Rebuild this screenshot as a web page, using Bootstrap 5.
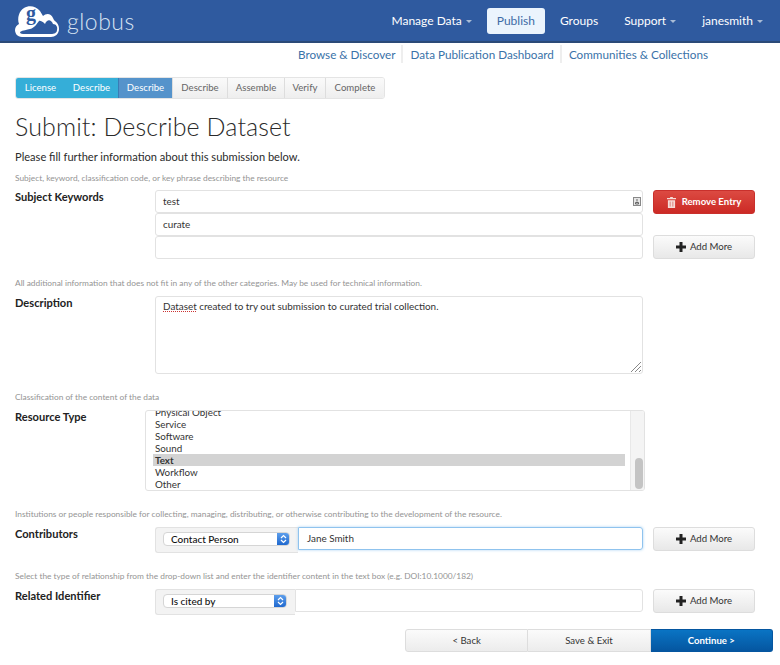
<!DOCTYPE html>
<html lang="en">
<head>
<meta charset="UTF-8">
<meta name="viewport" content="width=device-width, initial-scale=1">
<title>Submit: Describe Dataset</title>
<link href="https://cdn.jsdelivr.net/npm/bootstrap@5.3.0/dist/css/bootstrap.min.css" rel="stylesheet">
<style>
body { font-family: Lato, "Open Sans", sans-serif; color: #2b2b2b; font-size: 13px; background: #fff; }
.top-bar { height: 43px; background: #2f5a9f; border-bottom: 2px solid #2b4a78; padding: 0 4px 0 15px; }
.logo-mark { margin-top: -3px; }
.logo-word { font-size: 23px; font-weight: 300; color: #d7e3f2; letter-spacing: .5px; line-height: 1; margin-left: 8px; margin-top: 1px; }
.logo-g { font-family: "Liberation Serif", serif; font-weight: 700; font-size: 20px; fill: #2f5a9f; }
.top-link { color: #fff; font-size: 12px; text-decoration: none; padding: 0 13px; line-height: 26px; height: 26px; display: block; }
.top-link.on { background: #ebf4fd; color: #3e6ba6; border-radius: 3px; margin: 0 2px; padding: 0 10px; }
.nav-caret { display: inline-block; border-top: 3px solid #a9bcd6; border-left: 3px solid transparent; border-right: 3px solid transparent; margin-left: 4px; vertical-align: middle; }
.sub-links { margin: 2px 66px 0 0; height: 18px; }
.sub-links a { color: #3a72a8; font-size: 11.7px; text-decoration: none; padding: 0 6px 0 7px; line-height: 18px; border-left: 2px solid #eee; }
.sub-links a:first-child { border-left: 0; }
.page-wrap { padding: 0 7px 0 15px; }
.step-bar { margin-top: 14px; width: 370px; height: 22px; border-radius: 3px; overflow: hidden; border: 1px solid #e4e4e4; }
.step-item { font-size: 9.6px; line-height: 20px; text-align: center; color: #666; background: linear-gradient(#fafafa, #eee); border-left: 1px solid #ddd; }
.step-item.done { color: #fff; background: #35aed8; border-left: 0; }
.step-item.now { color: #fff; background: #5593cb; border-left: 1px solid #3a7cb5; }
.page-title { font-size: 25px; font-weight: 300; line-height: 32px; margin: 11px 0 0; color: #2a2a2a; letter-spacing: .1px; }
.intro { font-size: 11.1px; line-height: 16px; margin: 7px 0 0; }
.help-line { font-size: 8.35px; line-height: 12px; color: #949494; margin: 17px 0 0; }
.intro + .help-line { margin-top: 7px; }
.field-row { display: flex; margin-top: 7px; }
.field-row.tight { margin-top: 6px; }
.field-row.tight + .help-line { margin-top: 18px; }
.field-label { width: 140px; flex: none; font-size: 11.1px; font-weight: 700; line-height: 14px; color: #222; }
.field-main { width: 488px; flex: none; }
.field-side { width: 102px; flex: none; margin-left: 10px; }
.text-box { height: 23px; border: 1px solid #e2e2e2; border-radius: 3px; padding: 0 7px; font-size: 9.9px; display: flex; align-items: center; justify-content: space-between; background: #fff; color: #333; }
.key-icon { margin-right: -6px; }
.text-area { height: 78px; border: 1px solid #e2e2e2; border-radius: 3px; padding: 1px 7px; font-size: 9.9px; line-height: 16px; position: relative; color: #333; }
.spell { text-decoration: underline dotted #c33; }
.grip-corner { position: absolute; right: 1px; bottom: 1px; }
.side-btn { display: flex; align-items: center; justify-content: center; gap: 4px; width: 102px; height: 24px; border-radius: 3px; font-size: 9.6px; border: 1px solid #ddd; background: linear-gradient(#fbfbfb, #e8e8e8); color: #333; padding: 0; }
.side-btn.danger { gap: 6px; background: linear-gradient(#dc4a42, #cc2a25); border-color: #c9302c; color: #fff; font-weight: 700; }
.pick-list { margin-left: -10px; width: 500px; height: 81px; border: 1px solid #e2e2e2; border-radius: 3px; display: flex; overflow: hidden; }
.pick-body { flex: 1; padding: 0 5px 0 7px; overflow: hidden; }
.pick-body ul { margin: -5px 0 0; padding: 0; list-style: none; }
.pick-body li { font-size: 9.8px; line-height: 12px; padding-left: 2px; color: #333; }
.pick-body li.sel { background: #d3d3d3; font-weight: 700; }
.pick-scroll { width: 14px; flex: none; background: #f4f4f4; border-left: 1px solid #e8e8e8; display: flex; align-items: flex-end; justify-content: flex-end; padding: 0 1px 1px 0; }
.pick-thumb { width: 8px; height: 31px; background: #c4c4c4; border-radius: 4px; }
.input-join { display: flex; }
.join-addon { background: #f3f3f3; border: 1px solid #e2e2e2; border-right: 0; border-radius: 3px 0 0 3px; display: flex; align-items: center; padding: 0 8px 2px 7px; height: 26px; }
.mac-select { display: flex; align-items: center; justify-content: space-between; height: 14px; border-radius: 4px; background: #fff; border: 1px solid #d5d5d5; font-size: 10px; font-weight: 500; padding-left: 7px; color: #111; overflow: hidden; }
.mac-select.wide { width: 127px; }
.mac-select.narrow { width: 124px; }
.mac-arrows { width: 13px; height: 14px; background: linear-gradient(#62a3ee, #1a64cc); display: flex; align-items: center; justify-content: center; margin-right: -1px; }
.join-input { flex: 1; height: 23px; border: 1px solid #e2e2e2; border-radius: 0 3px 3px 0; padding: 0 8px; font-size: 9.9px; line-height: 21px; color: #333; }
.join-input.focused { border-color: #8fc3ee; box-shadow: 0 0 3px #a9d2f2; }
.foot-btns { width: 368px; margin: 14px 0 0 390px; height: 23px; }
.foot-btn { flex: 1; font-size: 9.6px; text-align: center; line-height: 21px; border: 1px solid #ddd; border-left: 0; background: linear-gradient(#fbfbfb, #ececec); color: #333; }
.foot-btn:first-child { border-left: 1px solid #ddd; border-radius: 3px 0 0 3px; }
.foot-btn.go { background: linear-gradient(#0a74c4, #0556a0); color: #fff; border-color: #0556a0; border-radius: 0 3px 3px 0; font-weight: 700; }
</style>
</head>
<body>
<nav class="top-bar d-flex align-items-center justify-content-between">
    <div class="d-flex align-items-center">
        <svg class="logo-mark" width="44" height="35" viewBox="0 -3 44 35">
            <path fill="#fff" d="M7 32C2 32 0 28 0 25 0 22 2 20 4 19 2 13 4 6 9 3 14 0 21 1 25 6 26 8 27 9 28 11 31 8 36 8 38 13 39 15 39 15 40 16 43 18 44 21 44 24 44 29 40 32 36 32Z"/>
            <path fill="#2f5a9f" d="M5 27C8 25 12 25 15 24 20 23 22 18 24 16 26 15 29 18 30 19 32 14 36 14 38 19 41 19 43 22 42 25 42 28 39 29 36 29L8 29C6 29 5 28 5 27Z"/>
            <text class="logo-g" x="11" y="15">g</text>
        </svg>
        <span class="logo-word">globus</span>
    </div>
    <div class="d-flex align-items-center">
        <a class="top-link" href="#">Manage Data<span class="nav-caret"></span></a>
        <a class="top-link on" href="#">Publish</a>
        <a class="top-link" href="#">Groups</a>
        <a class="top-link" href="#">Support<span class="nav-caret"></span></a>
        <a class="top-link" href="#">janesmith<span class="nav-caret"></span></a>
    </div>
</nav>

<div class="sub-links d-flex justify-content-end">
    <a href="#">Browse &amp; Discover</a>
    <a href="#">Data Publication Dashboard</a>
    <a href="#">Communities &amp; Collections</a>
</div>

<main class="page-wrap">
    <div class="step-bar d-flex">
        <div class="step-item done" style="width:49px">License</div>
        <div class="step-item done" style="width:53px">Describe</div>
        <div class="step-item now" style="width:54px">Describe</div>
        <div class="step-item" style="width:55px">Describe</div>
        <div class="step-item" style="width:57px">Assemble</div>
        <div class="step-item" style="width:41px">Verify</div>
        <div class="step-item" style="width:59px">Complete</div>
    </div>

    <h1 class="page-title">Submit: Describe Dataset</h1>
    <p class="intro">Please fill further information about this submission below.</p>

    <p class="help-line">Subject, keyword, classification code, or key phrase describing the resource</p>
    <div class="field-row tight">
        <div class="field-label">Subject Keywords</div>
        <div class="field-main">
            <div class="text-box">test
                <svg class="key-icon" width="8" height="9" viewBox="0 0 8 9"><rect x=".5" y=".5" width="7" height="8" fill="#e6e6e6" stroke="#888"/><path d="M4 2v2.500M2.500 5.500h3v1.500h-3z" stroke="#666" fill="none"/></svg>
            </div>
            <div class="text-box">curate</div>
            <div class="text-box">&nbsp;</div>
        </div>
        <div class="field-side d-flex flex-column justify-content-between">
            <button class="side-btn danger" type="button">
                <svg width="9" height="11" viewBox="0 0 10 12"><path fill="#f6dcd8" d="M3.500 0h3v1H10v1.500H0V1h3.500zM1 3.500h8V12H1z"/><path stroke="#d4605a" stroke-width=".8" d="M3.500 5v5.500M6.500 5v5.500"/></svg>
                Remove Entry
            </button>
            <button class="side-btn" type="button">
                <svg width="10" height="10" viewBox="0 0 10 10"><path fill="#222" d="M3.500 0h3v3.500H10v3H6.500V10h-3V6.500H0v-3h3.500z"/></svg>
                Add More
            </button>
        </div>
    </div>

    <p class="help-line">All additional information that does not fit in any of the other categories. May be used for technical information.</p>
    <div class="field-row">
        <div class="field-label">Description</div>
        <div class="field-main">
            <div class="text-area"><span class="spell">Dataset</span> created to try out submission to curated trial collection.
                <svg class="grip-corner" width="11" height="11" viewBox="0 0 11 11"><path stroke="#888" d="M1 11 11 1M5 11l6-6M9 11l2-2"/></svg>
            </div>
        </div>
    </div>

    <p class="help-line">Classification of the content of the data</p>
    <div class="field-row">
        <div class="field-label">Resource Type</div>
        <div class="field-main">
            <div class="pick-list">
                <div class="pick-body">
                    <ul>
                        <li>Physical Object</li>
                        <li>Service</li>
                        <li>Software</li>
                        <li>Sound</li>
                        <li class="sel">Text</li>
                        <li>Workflow</li>
                        <li>Other</li>
                    </ul>
                </div>
                <div class="pick-scroll"><div class="pick-thumb"></div></div>
            </div>
        </div>
    </div>

    <p class="help-line">Institutions or people responsible for collecting, managing, distributing, or otherwise contributing to the development of the resource.</p>
    <div class="field-row">
        <div class="field-label">Contributors</div>
        <div class="field-main input-join">
            <div class="join-addon">
                <div class="mac-select wide">Contact Person
                    <span class="mac-arrows"><svg width="7" height="10" viewBox="0 0 7 10"><path fill="none" stroke="#fff" stroke-width="1.200" d="M1 4l2.500-2.500L6 4M1 6l2.500 2.500L6 6"/></svg></span>
                </div>
            </div>
            <div class="join-input focused">Jane Smith</div>
        </div>
        <div class="field-side">
            <button class="side-btn" type="button">
                <svg width="10" height="10" viewBox="0 0 10 10"><path fill="#222" d="M3.500 0h3v3.500H10v3H6.500V10h-3V6.500H0v-3h3.500z"/></svg>
                Add More
            </button>
        </div>
    </div>

    <p class="help-line">Select the type of relationship from the drop-down list and enter the identifier content in the text box (e.g. DOI:10.1000/182)</p>
    <div class="field-row">
        <div class="field-label">Related Identifier</div>
        <div class="field-main input-join">
            <div class="join-addon">
                <div class="mac-select narrow">Is cited by
                    <span class="mac-arrows"><svg width="7" height="10" viewBox="0 0 7 10"><path fill="none" stroke="#fff" stroke-width="1.200" d="M1 4l2.500-2.500L6 4M1 6l2.500 2.500L6 6"/></svg></span>
                </div>
            </div>
            <div class="join-input"></div>
        </div>
        <div class="field-side">
            <button class="side-btn" type="button">
                <svg width="10" height="10" viewBox="0 0 10 10"><path fill="#222" d="M3.500 0h3v3.500H10v3H6.500V10h-3V6.500H0v-3h3.500z"/></svg>
                Add More
            </button>
        </div>
    </div>

    <div class="foot-btns d-flex">
        <div class="foot-btn">&lt; Back</div>
        <div class="foot-btn">Save &amp; Exit</div>
        <div class="foot-btn go">Continue &gt;</div>
    </div>
</main>
<script src="https://cdn.jsdelivr.net/npm/bootstrap@5.3.0/dist/js/bootstrap.bundle.min.js"></script>
</body>
</html>
